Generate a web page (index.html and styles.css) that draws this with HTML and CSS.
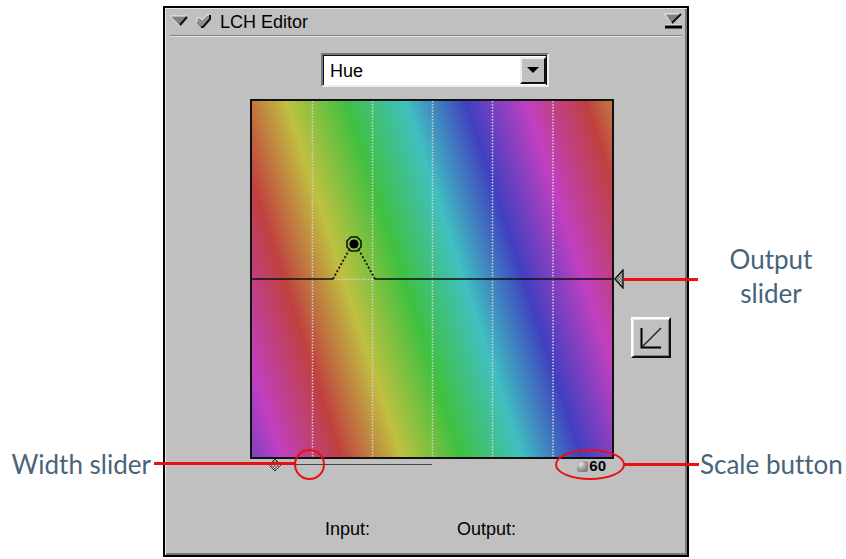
FILE: index.html
```html
<!DOCTYPE html>
<html lang="en">
<head>
<meta charset="utf-8">
<title>LCH Editor</title>
<link rel="stylesheet" href="styles.css">
</head>
<body>
<main class="figure">
  <p class="callout callout-width">Width slider</p>

  <section class="panel">
    <header class="titlebar">
      <button class="icon-button" aria-label="Collapse">
        <svg width="18" height="13" viewBox="0 0 18 13"><path d="M1 1H17L10 11Z" fill="#808080"/><path d="M0 1H16" stroke="#eee" stroke-width="1"/><path d="M1 2L10 11" stroke="#ddd"/><path d="M17 2L10 10" stroke="#111" stroke-width="2"/></svg>
      </button>
      <button class="icon-button" aria-label="Enable">
        <svg width="16" height="16" viewBox="0 0 16 16"><path d="M1 4H4L6 6L11 1H14V5L7 13H5L1 8Z" fill="#909090"/><path d="M1 8V4H4L6 6L11 1H13" stroke="#eee" fill="none"/><path d="M14 1V5L7 13H5" stroke="#111" stroke-width="2" fill="none"/><path d="M5 13L1 8" stroke="#666" fill="none"/></svg>
      </button>
      <h1 class="title">LCH Editor</h1>
      <button class="icon-button icon-end" aria-label="Panel menu">
        <svg width="18" height="17" viewBox="0 0 18 17"><path d="M2 1H16L8 11Z" fill="#808080"/><path d="M0 1H17" stroke="#eee"/><path d="M1 2L8 11" stroke="#ddd"/><path d="M17 1L8 10" stroke="#111" stroke-width="2"/><path d="M1 12H17" stroke="#eee"/><path d="M1 14H18" stroke="#000" stroke-width="3"/></svg>
      </button>
    </header>

    <div class="channel">
      <select class="channel-select" aria-label="Channel"><option>Hue</option></select>
      <span class="channel-arrow"></span>
    </div>

    <div class="editor">
      <div class="graph">
        <svg class="plot" viewBox="0 0 364 360" role="img" aria-label="Hue curve">
          <defs>
            <linearGradient id="hue" gradientUnits="userSpaceOnUse" x1="-25" y1="0" x2="335" y2="0" spreadMethod="repeat" gradientTransform="skewX(18)">
              <stop offset="0" stop-color="#c04040"/>
              <stop offset=".1667" stop-color="#c0c040"/>
              <stop offset=".3333" stop-color="#40c040"/>
              <stop offset=".5" stop-color="#40c0c0"/>
              <stop offset=".6667" stop-color="#4040c0"/>
              <stop offset=".8333" stop-color="#c040c0"/>
              <stop offset="1" stop-color="#c04040"/>
            </linearGradient>
          </defs>
          <rect x="1" y="1" width="362" height="358" fill="url(#hue)" stroke="#111" stroke-width="2"/>
          <path d="M62.500 2V358M122.500 2V358M182.500 2V358M242.500 2V358M303 2V358M85 180.500H124" stroke="#d0d0d0" stroke-width="1.500" stroke-dasharray="1.500 1.500"/>
          <path d="M1 180H83M125 180H363" stroke="#111" stroke-width="1.600"/>
          <path d="M83 180L99 151M125 180L109 151" stroke="#111" stroke-width="1.800" stroke-dasharray="2 2"/>
          <path d="M101 138H107L111 142V148L107 152H101L97 148V142Z" fill="none" stroke="#111" stroke-width="1.600"/>
          <circle cx="104" cy="145" r="4.600" fill="#000"/>
        </svg>
        <input class="output-slider" type="range" value="50" aria-label="Output">
        <span class="leader leader-output"></span>
        <button class="reset" aria-label="Reset curve">
          <svg width="22" height="22" viewBox="0 0 22 22"><path d="M1.500 1V20.500H21" fill="none" stroke="#000" stroke-width="2"/><path d="M2 20L21 1" stroke="#222" stroke-width="1.500"/></svg>
        </button>
      </div>
      <div class="under">
        <input class="width-slider" type="range" value="11" aria-label="Width">
        <button class="scale"><span class="bead"></span>60</button>
        <span class="leader leader-width"></span>
        <span class="ring ring-width"></span>
        <span class="ring ring-scale"></span>
        <span class="leader leader-scale"></span>
      </div>
    </div>

    <footer class="readout">
      <span>Input:</span>
      <span>Output:</span>
    </footer>
  </section>

  <div class="callouts-right">
    <p class="callout callout-output">Output<br>slider</p>
    <p class="callout callout-scale">Scale button</p>
  </div>
</main>
</body>
</html>
```
FILE: styles.css
```css
* { box-sizing: border-box; }

body {
  margin: 0;
  background: #fff;
  color: #000;
  font: 18px/24px "Liberation Sans", Arial, sans-serif;
}

button {
  padding: 0;
  border: 0;
  background: none;
  color: inherit;
  font: inherit;
}

svg { display: block; }

.figure {
  display: grid;
  grid-template-columns: minmax(150px, 163fr) minmax(400px, 526fr) minmax(150px, 157fr);
  padding-top: 6px;
}

.callout {
  margin: 0;
  color: #48647a;
  font: 26px/34px Lato, sans-serif;
  font-variant-ligatures: none;
  white-space: nowrap;
}

.callout-width {
  align-self: end;
  padding: 0 12px 76px 0;
  text-align: right;
}

.callouts-right {
  display: flex;
  flex-direction: column;
  justify-content: space-between;
  padding: 236px 0 76px 11px;
}

.callout-output {
  padding-right: 4px;
  text-align: center;
}

.panel {
  border: 2px solid #000;
  background: #c0c0c0;
  box-shadow: inset 1px 1px #e8e8e8, inset -2px -2px #777;
}

.titlebar {
  display: flex;
  align-items: center;
  gap: 8px;
  height: 28px;
  margin: 0 5px;
  border-bottom: 1px solid #808080;
  box-shadow: 0 1px #e4e4e4;
}

.title {
  margin: 0;
  font-size: 18px;
  font-weight: 400;
}

.icon-end { margin-left: auto; }

.channel {
  position: relative;
  width: 228px;
  height: 34px;
  margin: 17px auto 12px;
  left: 9px;
}

.channel-select {
  appearance: none;
  width: 100%;
  height: 100%;
  padding: 2px 36px 0 7px;
  border: 2px solid;
  border-color: #777 #eee #eee #777;
  border-radius: 0;
  background: #fff;
  box-shadow: inset 1px 1px #111, inset -1px 0 #111;
  color: #000;
  font: inherit;
}

.channel-arrow {
  position: absolute;
  top: 4px;
  right: 3px;
  width: 26px;
  height: 27px;
  border: 2px solid;
  border-color: #eee #111 #111 #eee;
  background: #c0c0c0;
  pointer-events: none;
}

.channel-arrow::after {
  content: "";
  position: absolute;
  top: 8px;
  left: 5px;
  border: 6px solid transparent;
  border-top-color: #000;
  border-bottom: 0;
}

.editor { padding: 0 73px 0 85px; }

.graph { position: relative; }

.plot {
  width: 100%;
  height: auto;
}

.output-slider,
.width-slider {
  appearance: none;
  display: block;
  margin: 0;
  background: none;
}

.output-slider {
  position: absolute;
  top: 0;
  left: 100%;
  writing-mode: vertical-lr;
  width: 10px;
  height: 100%;
}

.output-slider::-webkit-slider-thumb {
  appearance: none;
  width: 10px;
  height: 20px;
  background: url("data:image/svg+xml,%3Csvg xmlns='http://www.w3.org/2000/svg' width='10' height='20'%3E%3Cdefs%3E%3Cpattern id='p' width='3' height='3' patternUnits='userSpaceOnUse'%3E%3Crect width='3' height='3' fill='%23d8d8d8'/%3E%3Cpath d='M0 0h1.500v1.500H0zM1.500 1.500H3V3H1.500z' fill='%23555'/%3E%3C/pattern%3E%3C/defs%3E%3Cpath d='M1 10L9 1V19Z' fill='url(%23p)' stroke='%23111' stroke-width='1.400'/%3E%3C/svg%3E");
}

.reset {
  position: absolute;
  top: calc(50% + 38px);
  left: calc(100% + 17px);
  display: grid;
  place-items: center;
  width: 40px;
  height: 41px;
  border: 2px solid;
  border-color: #fff #111 #111 #fff;
  box-shadow: inset 1px 1px #e4e4e4, inset -1px -1px #808080;
}

.under {
  position: relative;
  display: flex;
  justify-content: space-between;
  height: 14px;
}

.width-slider {
  width: 50%;
  height: 14px;
  background: linear-gradient(#444, #444) 0 5px / 100% 1px no-repeat;
}

.width-slider::-webkit-slider-thumb {
  appearance: none;
  width: 14px;
  height: 14px;
  background: url("data:image/svg+xml,%3Csvg xmlns='http://www.w3.org/2000/svg' width='14' height='14'%3E%3Cdefs%3E%3Cpattern id='p' width='3' height='3' patternUnits='userSpaceOnUse'%3E%3Crect width='3' height='3' fill='%23d8d8d8'/%3E%3Cpath d='M0 0h1.500v1.500H0zM1.500 1.500H3V3H1.500z' fill='%23555'/%3E%3C/pattern%3E%3C/defs%3E%3Cpath d='M7 0L13 6L7 12L1 6Z' fill='url(%23p)' stroke='%23333'/%3E%3C/svg%3E");
}

.scale {
  display: flex;
  align-items: center;
  gap: 1px;
  margin-right: 8px;
  font-size: 15px;
  font-weight: 700;
  line-height: 14px;
}

.bead {
  width: 11px;
  height: 11px;
  border-radius: 3px;
  background: radial-gradient(circle at 35% 30%, #e4e4e4, #999 50%, #666);
}

/* Annotation marks drawn over the controls */
.leader {
  position: absolute;
  height: 3px;
  background: #e81010;
}

.leader-output {
  top: calc(50% - 1px);
  left: calc(100% + 10px);
  width: 74px;
}

.leader-width {
  top: 3px;
  left: -96px;
  width: 141px;
}

.leader-scale {
  top: 4px;
  left: calc(100% + 10px);
  width: 75px;
}

.ring {
  position: absolute;
  border: 2px solid #e81010;
  border-radius: 50%;
}

.ring-width {
  top: -10px;
  left: 44px;
  width: 31px;
  height: 31px;
}

.ring-scale {
  top: -10px;
  right: -11px;
  width: 70px;
  height: 31px;
}

.readout {
  display: flex;
  gap: 87px;
  padding: 44px 0 14px 160px;
}
```
